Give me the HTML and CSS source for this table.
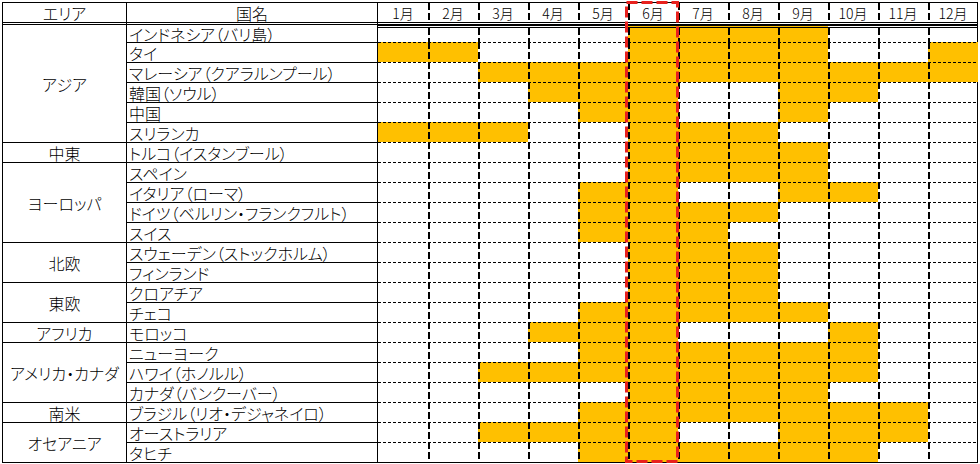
FILE: index.html
```html
<!DOCTYPE html>
<html lang="ja">
<head>
<meta charset="utf-8">
<title>渡航ベストシーズン</title>
<link rel="stylesheet" href="styles.css">
</head>
<body>
<div class="sheet">
  <div class="c a hd">エリア</div>
  <div class="c h hd">国名</div>
  <div class="ms hd"><span>1月</span><span>2月</span><span>3月</span><span>4月</span><span>5月</span><span>6月</span><span>7月</span><span>8月</span><span>9月</span><span>10月</span><span>11月</span><span>12月</span></div>

  <div class="c a s6 first">アジア</div>
  <div class="c n first">インドネシア（バリ島）</div>
  <div class="ms first"><span></span><span></span><span></span><span></span><span></span><span class="f"></span><span class="f"></span><span class="f"></span><span class="f"></span><span></span><span></span><span></span></div>
  <div class="c n">タイ</div>
  <div class="ms"><span class="f"></span><span class="f"></span><span></span><span></span><span></span><span class="f"></span><span class="f"></span><span class="f"></span><span class="f"></span><span></span><span></span><span class="f"></span></div>
  <div class="c n">マレーシア（クアラルンプール）</div>
  <div class="ms"><span></span><span></span><span class="f"></span><span class="f"></span><span class="f"></span><span class="f"></span><span class="f"></span><span class="f"></span><span class="f"></span><span class="f"></span><span class="f"></span><span class="f"></span></div>
  <div class="c n">韓国（ソウル）</div>
  <div class="ms"><span></span><span></span><span></span><span class="f"></span><span class="f"></span><span class="f"></span><span></span><span></span><span class="f"></span><span class="f"></span><span></span><span></span></div>
  <div class="c n">中国</div>
  <div class="ms"><span></span><span></span><span></span><span></span><span class="f"></span><span class="f"></span><span></span><span></span><span class="f"></span><span></span><span></span><span></span></div>
  <div class="c n">スリランカ</div>
  <div class="ms"><span class="f"></span><span class="f"></span><span class="f"></span><span></span><span></span><span class="f"></span><span class="f"></span><span class="f"></span><span></span><span></span><span></span><span></span></div>

  <div class="c a s1">中東</div>
  <div class="c n">トルコ（イスタンブール）</div>
  <div class="ms"><span></span><span></span><span></span><span></span><span></span><span class="f"></span><span class="f"></span><span class="f"></span><span class="f"></span><span></span><span></span><span></span></div>

  <div class="c a s4">ヨーロッパ</div>
  <div class="c n">スペイン</div>
  <div class="ms"><span></span><span></span><span></span><span></span><span></span><span class="f"></span><span class="f"></span><span class="f"></span><span class="f"></span><span></span><span></span><span></span></div>
  <div class="c n">イタリア（ローマ）</div>
  <div class="ms"><span></span><span></span><span></span><span></span><span class="f"></span><span class="f"></span><span></span><span></span><span class="f"></span><span class="f"></span><span></span><span></span></div>
  <div class="c n">ドイツ（ベルリン・フランクフルト）</div>
  <div class="ms"><span></span><span></span><span></span><span></span><span class="f"></span><span class="f"></span><span class="f"></span><span class="f"></span><span></span><span></span><span></span><span></span></div>
  <div class="c n">スイス</div>
  <div class="ms"><span></span><span></span><span></span><span></span><span class="f"></span><span class="f"></span><span class="f"></span><span></span><span></span><span></span><span></span><span></span></div>

  <div class="c a s2">北欧</div>
  <div class="c n">スウェーデン（ストックホルム）</div>
  <div class="ms"><span></span><span></span><span></span><span></span><span></span><span class="f"></span><span class="f"></span><span class="f"></span><span></span><span></span><span></span><span></span></div>
  <div class="c n">フィンランド</div>
  <div class="ms"><span></span><span></span><span></span><span></span><span></span><span class="f"></span><span class="f"></span><span class="f"></span><span></span><span></span><span></span><span></span></div>

  <div class="c a s2">東欧</div>
  <div class="c n">クロアチア</div>
  <div class="ms"><span></span><span></span><span></span><span></span><span></span><span class="f"></span><span class="f"></span><span class="f"></span><span></span><span></span><span></span><span></span></div>
  <div class="c n">チェコ</div>
  <div class="ms"><span></span><span></span><span></span><span></span><span class="f"></span><span class="f"></span><span class="f"></span><span class="f"></span><span class="f"></span><span></span><span></span><span></span></div>

  <div class="c a s1">アフリカ</div>
  <div class="c n">モロッコ</div>
  <div class="ms"><span></span><span></span><span></span><span class="f"></span><span class="f"></span><span class="f"></span><span></span><span></span><span></span><span class="f"></span><span></span><span></span></div>

  <div class="c a s3">アメリカ・カナダ</div>
  <div class="c n">ニューヨーク</div>
  <div class="ms"><span></span><span></span><span></span><span></span><span class="f"></span><span class="f"></span><span class="f"></span><span class="f"></span><span class="f"></span><span class="f"></span><span></span><span></span></div>
  <div class="c n">ハワイ（ホノルル）</div>
  <div class="ms"><span></span><span></span><span class="f"></span><span class="f"></span><span class="f"></span><span class="f"></span><span class="f"></span><span class="f"></span><span class="f"></span><span class="f"></span><span></span><span></span></div>
  <div class="c n">カナダ（バンクーバー）</div>
  <div class="ms"><span></span><span></span><span></span><span></span><span></span><span class="f"></span><span class="f"></span><span class="f"></span><span class="f"></span><span></span><span></span><span></span></div>

  <div class="c a s1">南米</div>
  <div class="c n">ブラジル（リオ・デジャネイロ）</div>
  <div class="ms"><span></span><span></span><span></span><span></span><span class="f"></span><span class="f"></span><span class="f"></span><span class="f"></span><span class="f"></span><span class="f"></span><span class="f"></span><span></span></div>

  <div class="c a s2">オセアニア</div>
  <div class="c n">オーストラリア</div>
  <div class="ms"><span></span><span></span><span class="f"></span><span class="f"></span><span class="f"></span><span class="f"></span><span></span><span></span><span class="f"></span><span class="f"></span><span class="f"></span><span></span></div>
  <div class="c n">タヒチ</div>
  <div class="ms"><span></span><span></span><span></span><span></span><span class="f"></span><span class="f"></span><span class="f"></span><span class="f"></span><span class="f"></span><span class="f"></span><span></span><span></span></div>

  <svg class="focus" width="54" height="462" viewBox="0 0 54 462" aria-hidden="true">
    <rect x="1.5" y="1.5" width="51" height="459" fill="none" stroke="#e8211d" stroke-width="3" stroke-dasharray="11 4"/>
  </svg>
</div>
</body>
</html>
```
FILE: styles.css
```css
html, body {
  margin: 0;
  background: #ffffff;
}
body {
  padding: 2px;
  font-family: "Noto Sans CJK JP", "Noto Sans", sans-serif;
  font-size: 16px;
  font-weight: 300;
  color: #000;
  font-feature-settings: "palt";
}
.sheet {
  position: relative;
  display: grid;
  grid-template-columns: 124px 251px 600px;
  grid-auto-rows: 20px;
  width: max-content;
  border-right: 1px solid #000;
  border-bottom: 1px solid #000;
}
.c {
  box-sizing: border-box;
  border-left: 1px solid #000;
  border-top: 1px solid #000;
  display: flex;
  align-items: center;
  white-space: nowrap;
  line-height: 18px;
}
.a, .h { justify-content: center; }
.n { padding-left: 2px; }
.s1 { grid-row: span 1; }
.s2 { grid-row: span 2; }
.s3 { grid-row: span 3; }
.s4 { grid-row: span 4; }
.s6 { grid-row: span 6; }
.first { border-top: 3px double #000; }

.ms {
  display: flex;
  border-left: 1px solid #000;
}
.ms span {
  box-sizing: border-box;
  flex: 0 0 50px;
  height: 20px;
  background-image:
    repeating-linear-gradient(to right, #000 0 3px, transparent 3px 5px),
    repeating-linear-gradient(to bottom, #000 0 7px, transparent 7px 10px);
  background-size: 100% 1px, 2px 100%;
  background-position: 0 0, 0 0;
  background-repeat: no-repeat;
}
.ms span:first-child {
  background-image: repeating-linear-gradient(to right, #000 0 3px, transparent 3px 5px);
  background-size: 100% 1px;
  background-position: 0 0;
}
.ms.first span {
  border-top: 3px double #000;
  background-image: repeating-linear-gradient(to bottom, #000 0 7px, transparent 7px 10px);
  background-size: 2px 100%;
  background-position: 0 0;
}
.ms.hd span {
  border-top: 1px solid #000;
  display: flex;
  align-items: center;
  justify-content: center;
  line-height: 18px;
  font-size: 14px;
  background-image: repeating-linear-gradient(to bottom, #000 0 7px, transparent 7px 10px);
  background-size: 2px 100%;
  background-position: 0 0;
}
.ms.first span:first-child, .ms.hd span:first-child { background-image: none; }
.ms span.f { background-color: #ffc000; }

.focus {
  position: absolute;
  left: 623px;
  top: -1px;
}
```
